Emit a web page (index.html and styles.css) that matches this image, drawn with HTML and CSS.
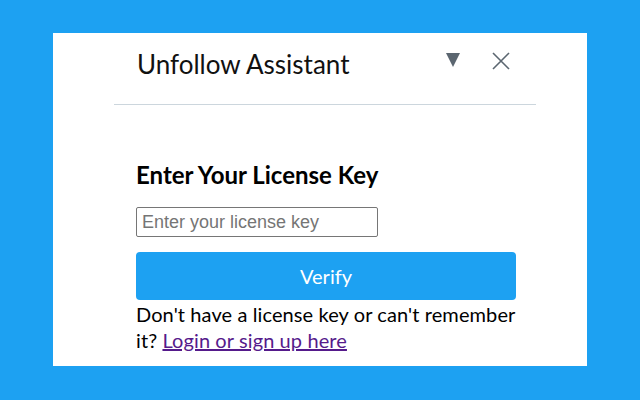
FILE: index.html
```html
<!DOCTYPE html>
<html>
  <head>
    <link rel="stylesheet" href="styles.css">
  </head>
  <body>
    <div id="panel">
      <div id="content">
        <div id="header">
          <span id="title">Unfollow Assistant</span>
          <span id="minimize">
            <svg width="16" height="16" viewBox="0 0 16 16"><path d="M1 1 L15 1 L8 15 Z" fill="#5b6670"/></svg>
          </span>
          <span id="close">
            <svg width="18" height="18" viewBox="0 0 18 18"><path d="M1 1 L17 17 M17 1 L1 17" stroke="#5b6670" stroke-width="1.6" fill="none"/></svg>
          </span>
        </div>
        <div id="form">
          <h2>Enter Your License Key</h2>
          <input id="licenseKey" type="text" placeholder="Enter your license key">
          <button id="verify">Verify</button>
          <div id="note">Don't have a license key or can't remember it? <a href="#">Login or sign up here</a></div>
        </div>
      </div>
    </div>
  </body>
</html>
```

FILE: styles.css
```css
body {
    margin: 0;
    background: #1da1f2;
    padding: 33px 53px;
    font-family: Lato, sans-serif;
}
#panel {
    background: white;
    width: 534px;
    height: 333px;
    padding-left: 61px;
    box-sizing: border-box;
}
#content {
    width: 422px;
}
#header {
    display: flex;
    align-items: flex-start;
    height: 72px;
    box-sizing: border-box;
    padding: 15px 0 0 23px;
    border-bottom: 1px solid #ccd6dd;
}
#title {
    font-size: 26px;
    line-height: 32px;
    color: #111;
    flex: 1;
}
#minimize {
    display: flex;
    margin: 4px 31px 0 0;
}
#close {
    display: flex;
    margin: 4px 26px 0 0;
}
#form {
    padding-left: 22px;
    width: 380px;
}
h2 {
    font-size: 24px;
    line-height: 30px;
    font-weight: bold;
    margin: 55px 0 17px;
    color: #000;
}
#licenseKey {
    display: block;
    width: 242px;
    height: 30px;
    box-sizing: border-box;
    border: 1px solid #767676;
    border-radius: 2px;
    font-family: "Liberation Sans", Arial, sans-serif;
    font-size: 18px;
    padding: 0 5px;
}
#licenseKey::placeholder {
    color: #757575;
}
#verify {
    display: block;
    width: 380px;
    height: 48px;
    margin-top: 15px;
    border: none;
    border-radius: 4px;
    background: #1da1f2;
    color: white;
    font-family: inherit;
    font-size: 20px;
}
#note {
    font-size: 20px;
    line-height: 26px;
    letter-spacing: 0.1px;
    color: #000;
    margin-top: 1px;
}
#note a {
    color: #551a8b;
}
```
